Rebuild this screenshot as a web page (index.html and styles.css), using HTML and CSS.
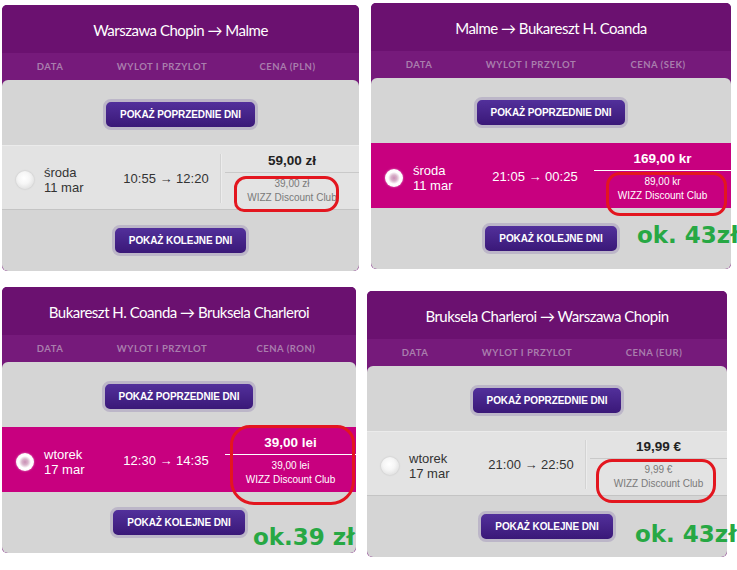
FILE: index.html
```html
<!DOCTYPE html>
<html lang="pl">
<head>
<meta charset="utf-8">
<title>Loty WIZZ – porównanie cen</title>
<link rel="stylesheet" href="styles.css">
</head>
<body>
<div class="sheet">

  <section class="fare fare--a">
    <header class="fare__title">Warszawa Chopin → Malme</header>
    <div class="fare__cols"><span>DATA</span><span>WYLOT I PRZYLOT</span><span class="col-price">CENA (PLN)</span></div>
    <div class="fare__body">
      <div class="fare__nav"><button class="day-btn">POKAŻ POPRZEDNIE DNI</button></div>
      <div class="flight">
        <div class="flight__date"><span class="radio"></span><span class="flight__day">środa<br>11 mar</span></div>
        <div class="flight__time">10:55 → 12:20</div>
        <div class="flight__price"><div class="price">59,00 zł</div><div class="club">39,00 zł<br>WIZZ Discount Club</div></div>
        <span class="mark mark--a"></span>
      </div>
      <div class="fare__nav"><button class="day-btn">POKAŻ KOLEJNE DNI</button></div>
    </div>
  </section>

  <section class="fare fare--b">
    <header class="fare__title">Malme → Bukareszt H. Coanda</header>
    <div class="fare__cols"><span>DATA</span><span>WYLOT I PRZYLOT</span><span class="col-price">CENA (SEK)</span></div>
    <div class="fare__body">
      <div class="fare__nav"><button class="day-btn">POKAŻ POPRZEDNIE DNI</button></div>
      <div class="flight flight--selected">
        <div class="flight__date"><span class="radio radio--on"></span><span class="flight__day">środa<br>11 mar</span></div>
        <div class="flight__time">21:05 → 00:25</div>
        <div class="flight__price"><div class="price">169,00 kr</div><div class="club">89,00 kr<br>WIZZ Discount Club</div></div>
        <span class="mark mark--b"></span>
      </div>
      <div class="fare__nav"><button class="day-btn">POKAŻ KOLEJNE DNI</button><span class="note note--b">ok. 43zł</span></div>
    </div>
  </section>

  <section class="fare fare--c">
    <header class="fare__title">Bukareszt H. Coanda → Bruksela Charleroi</header>
    <div class="fare__cols"><span>DATA</span><span>WYLOT I PRZYLOT</span><span class="col-price">CENA (RON)</span></div>
    <div class="fare__body">
      <div class="fare__nav"><button class="day-btn">POKAŻ POPRZEDNIE DNI</button></div>
      <div class="flight flight--selected">
        <div class="flight__date"><span class="radio radio--on"></span><span class="flight__day">wtorek<br>17 mar</span></div>
        <div class="flight__time">12:30 → 14:35</div>
        <div class="flight__price"><div class="price">39,00 lei</div><div class="club">39,00 lei<br>WIZZ Discount Club</div></div>
        <span class="mark mark--c"></span>
      </div>
      <div class="fare__nav"><button class="day-btn">POKAŻ KOLEJNE DNI</button><span class="note note--c">ok.39 zł</span></div>
    </div>
  </section>

  <section class="fare fare--d">
    <header class="fare__title">Bruksela Charleroi → Warszawa Chopin</header>
    <div class="fare__cols"><span>DATA</span><span>WYLOT I PRZYLOT</span><span class="col-price">CENA (EUR)</span></div>
    <div class="fare__body">
      <div class="fare__nav"><button class="day-btn">POKAŻ POPRZEDNIE DNI</button></div>
      <div class="flight">
        <div class="flight__date"><span class="radio"></span><span class="flight__day">wtorek<br>17 mar</span></div>
        <div class="flight__time">21:00 → 22:50</div>
        <div class="flight__price"><div class="price">19,99 €</div><div class="club">9,99 €<br>WIZZ Discount Club</div></div>
        <span class="mark mark--d"></span>
      </div>
      <div class="fare__nav"><button class="day-btn">POKAŻ KOLEJNE DNI</button><span class="note note--d">ok. 43zł</span></div>
    </div>
  </section>

</div>
</body>
</html>
```

FILE: styles.css
```css
* { box-sizing: border-box; }

html, body {
  margin: 0;
  padding: 0;
  background: #fff;
}

body {
  width: 737px;
  height: 570px;
  overflow: hidden;
  font-family: "Liberation Sans", Arial, sans-serif;
}

/* two-by-two sheet of fare tables */
.sheet {
  display: grid;
  grid-template-columns: 365px 372px;
  align-items: start;
}

.fare {
  position: relative;
  display: flex;
  flex-direction: column;
  background: #761a7b;
  border-radius: 5px;
}

.fare--a { width: 357px; margin: 5px 0 0 2px; }
.fare--b { width: 360px; margin: 3px 0 0 6px; }
.fare--c { width: 354px; margin: 16px 0 0 2px; }
.fare--d { width: 360px; margin: 20px 0 0 2px; }

.fare__title {
  height: 48px;
  display: flex;
  align-items: center;
  justify-content: center;
  background: #6b1170;
  border-radius: 5px 5px 0 0;
  color: #fff;
  font-family: Lato, "Open Sans", sans-serif;
  font-size: 15px;
  letter-spacing: -0.5px;
  padding-top: 2px;
}

.fare__cols {
  height: 27px;
  display: grid;
  grid-template-columns: 96px 128px 1fr;
  align-items: center;
  text-align: center;
  color: #a97dad;
  font-family: Lato, "Open Sans", sans-serif;
  font-weight: 700;
  font-size: 9.5px;
  letter-spacing: 0.5px;
  padding-bottom: 1px;
}

.col-price { padding-right: 10px; }

.fare__body {
  background: #d5d5d5;
  border-radius: 6px;
  padding: 19px 0 15px;
  display: flex;
  flex-direction: column;
  gap: 15px;
}

.fare__nav {
  position: relative;
  display: flex;
  justify-content: center;
}

.day-btn {
  height: 31px;
  padding: 0 14px;
  border: 3px solid #bcb6c8;
  border-radius: 8px;
  background: linear-gradient(#52309b, #3a1878);
  color: #fff;
  font-family: "Liberation Sans", Arial, sans-serif;
  font-weight: 700;
  font-size: 10px;
  letter-spacing: -0.1px;
  line-height: 25px;
  cursor: pointer;
}

/* one flight row */
.flight {
  position: relative;
  height: 65px;
  display: grid;
  grid-template-columns: 104px 116px 1fr;
  align-items: center;
  background: #e3e3e3;
  border-top: 1px solid #ebebeb;
  border-bottom: 1px solid #c4c4c4;
  color: #333;
  font-size: 13px;
}

.flight--selected {
  background: #c8007f;
  border-color: #c8007f;
  color: #fff;
}

.flight__date {
  display: flex;
  align-items: center;
  padding-left: 14px;
  gap: 10px;
  padding-top: 4px;
}

.flight__day {
  line-height: 15px;
}

.flight__time {
  text-align: center;
  padding-top: 1px;
  padding-left: 4px;
}

.radio {
  width: 18px;
  height: 18px;
  border-radius: 50%;
  flex: none;
  background: radial-gradient(circle at 45% 40%, #ffffff 0, #f6f6f6 40%, #e2e2e2 75%, #d2d2d2 100%);
  box-shadow: 0 0 2px rgba(0, 0, 0, 0.18);
}

.radio--on {
  background: radial-gradient(circle, #c98fb5 0, #d9b3cb 3px, #fff 6px, #fbf4f8 100%);
  box-shadow: 0 0 2px rgba(255, 255, 255, 0.6);
}

.flight__price {
  position: relative;
  align-self: stretch;
  padding: 6px 0 0 3px;
  text-align: center;
}

.flight__price::before {
  content: "";
  position: absolute;
  left: -2px;
  top: 8px;
  bottom: 6px;
  border-left: 1px solid #d3d3d3;
  box-shadow: 1px 0 0 #ececec;
}

.flight--selected .flight__price::before { display: none; }

.price {
  font-weight: 700;
  font-size: 13.5px;
  line-height: 17px;
  padding-bottom: 3px;
  border-bottom: 1px solid #c9c9c9;
  color: #222;
}

.flight--selected .price {
  color: #fff;
  border-bottom-color: #fff;
}

.club {
  padding-top: 4px;
  font-size: 10px;
  line-height: 14px;
  color: #7a7a7a;
}

.flight--selected .club { color: #fff; }

/* hand-drawn highlight around the club fare */
.mark {
  position: absolute;
  border: 3px solid #e3161f;
  border-radius: 16px;
  pointer-events: none;
}

.mark--a { left: 232px; top: 30px; width: 105px; height: 36px; border-radius: 12px 14px 14px 10px; }
.mark--b { left: 235px; top: 28px; width: 121px; height: 44px; border-radius: 14px; }
.mark--c { left: 228px; top: -3px; width: 125px; height: 80px; border-radius: 20px 18px 24px 24px; }
.mark--d { left: 229px; top: 27px; width: 120px; height: 44px; border-radius: 16px 14px 18px 16px; }

/* price note written next to the button */
.note {
  position: absolute;
  font-family: "DejaVu Sans", Verdana, sans-serif;
  font-weight: 700;
  font-size: 23px;
  line-height: 26px;
  color: #27a844;
  white-space: nowrap;
}

.note--b { left: 266px; top: -1px; }
.note--c { left: 251px; top: 17px; }
.note--d { left: 268px; top: 10px; }
```
